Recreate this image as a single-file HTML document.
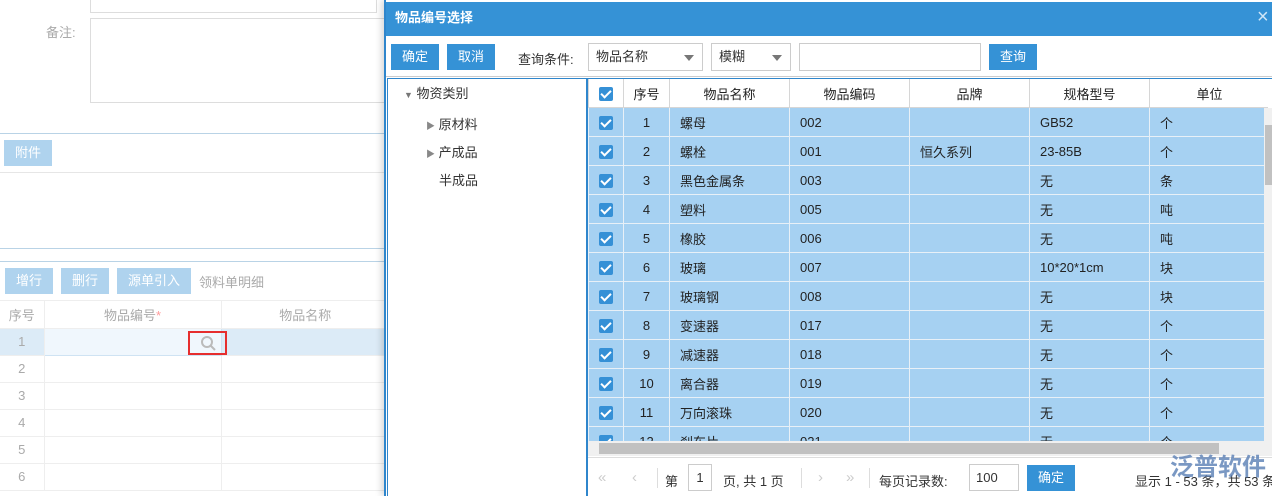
<!DOCTYPE html>
<html><head><meta charset="utf-8"><style>
*{box-sizing:border-box;margin:0;padding:0}
body{width:1272px;height:496px;overflow:hidden;background:#fff;font-family:"Liberation Sans","Noto Sans CJK SC",sans-serif;font-size:13px;position:relative;color:#333}
.a{position:absolute;white-space:nowrap}
.lb{color:#aaa}
.fb{background:#afd3ee;color:#fff;height:26px;line-height:26px;text-align:center}
.lt{border-collapse:collapse;table-layout:fixed}
.lt td{border-right:1px solid #eee;border-bottom:1px solid #eee;height:27px;color:#aaa;text-align:center}
.g{border-collapse:collapse;table-layout:fixed}
.g td{border:1px solid #d6d6d6;height:29px;padding:0 10px;white-space:nowrap;overflow:hidden;color:#222}
.g tr.r td{background:#a6d1f2;border-color:#e8f0f7}
.cb{display:inline-block;width:14px;height:14px;background:#3590d6;border-radius:2px;position:relative;vertical-align:middle}
.cb:after{content:"";position:absolute;left:4px;top:1px;width:4px;height:8px;border:solid #fff;border-width:0 2px 2px 0;transform:rotate(45deg)}
.btn{background:#3592d6;color:#fff;text-align:center;height:26px;line-height:26px}
.sel{border:1px solid #ccc;height:28px;line-height:26px;padding-left:7px;color:#333;background:#fff}
.sel:after{content:"";position:absolute;right:8px;top:11px;border:5px solid transparent;border-top:6px solid #777}
</style></head><body>
<div class="a" style="left:90px;top:0;width:287px;height:13px;border:1px solid #ddd;border-top:none"></div>
<div class="a lb" style="left:46px;top:22px">备注:</div>
<div class="a" style="left:90px;top:18px;width:300px;height:85px;border:1px solid #ddd"></div>
<div class="a" style="left:0;top:133px;width:384px;height:1px;background:#b9d3e6"></div>
<div class="a fb" style="left:4px;top:140px;width:48px">附件</div>
<div class="a" style="left:0;top:172px;width:384px;height:1px;background:#e6e6e6"></div>
<div class="a" style="left:0;top:248px;width:384px;height:1px;background:#b9d3e6"></div>
<div class="a" style="left:0;top:261px;width:384px;height:1px;background:#b9d3e6"></div>
<div class="a fb" style="left:5px;top:268px;width:48px">增行</div>
<div class="a fb" style="left:61px;top:268px;width:48px">删行</div>
<div class="a fb" style="left:117px;top:268px;width:74px">源单引入</div>
<div class="a lb" style="left:199px;top:272px">领料单明细</div>
<div class="a" style="left:0;top:300px;width:384px;height:1px;background:#eee"></div>
<table class="a lt" style="left:0;top:301px;width:390px">
<colgroup><col style="width:44px"><col style="width:177px"><col></colgroup>
<tr><td>序号</td><td>物品编号<span style="color:#f99">*</span></td><td>物品名称</td></tr>
<tr style="background:#dcebf7"><td>1</td><td style="background:#f0f7fd;border:1px solid #cfe3f3"></td><td></td></tr>
<tr><td>2</td><td></td><td></td></tr><tr><td>3</td><td></td><td></td></tr>
<tr><td>4</td><td></td><td></td></tr><tr><td>5</td><td></td><td></td></tr><tr><td>6</td><td></td><td></td></tr>
</table>
<div class="a" style="left:188px;top:331px;width:39px;height:24px;border:2px solid #e62e2e"></div>
<svg class="a" style="left:200px;top:335px" width="16" height="16"><circle cx="7" cy="7" r="5" fill="none" stroke="#bbb" stroke-width="2"/><line x1="11" y1="11" x2="15" y2="15" stroke="#bbb" stroke-width="2"/></svg>
<div class="a" style="left:384px;top:0;width:888px;height:496px;background:#fff;border-left:2px solid #2f86cc;box-shadow:-3px 0 6px rgba(0,0,0,.15)"></div>
<div class="a" style="left:386px;top:2px;width:886px;height:34px;background:#3592d6;color:#fff;font-weight:bold;font-size:13px;line-height:32px;padding-left:9px">物品编号选择</div>
<div class="a" style="left:1257px;top:6px;color:#d0e6f7;font-size:20px">×</div>
<div class="a btn" style="left:391px;top:44px;width:48px">确定</div>
<div class="a btn" style="left:447px;top:44px;width:48px">取消</div>
<div class="a" style="left:518px;top:49px;color:#333">查询条件:</div>
<div class="a sel" style="left:588px;top:43px;width:115px">物品名称</div>
<div class="a sel" style="left:711px;top:43px;width:80px">模糊</div>
<div class="a" style="left:799px;top:43px;width:182px;height:28px;border:1px solid #ccc"></div>
<div class="a btn" style="left:989px;top:44px;width:48px">查询</div>
<div class="a" style="left:386px;top:76px;width:886px;height:1px;background:#ccc"></div>
<div class="a" style="left:387px;top:78px;width:885px;height:418px;border:1px solid #2f86cc;border-right:none;border-bottom:none"></div>
<div class="a" style="left:586px;top:78px;width:2px;height:418px;background:#2f86cc"></div>
<div class="a" style="left:404px;top:86px;color:#333;line-height:16px"><span style="color:#777;font-size:9px">▼</span> 物资类别</div>
<div class="a" style="left:426px;top:114px;color:#333"><span style="color:#888;font-size:9px">▶</span> 原材料</div>
<div class="a" style="left:426px;top:142px;color:#333"><span style="color:#888;font-size:9px">▶</span> 产成品</div>
<div class="a" style="left:439px;top:170px;color:#333">半成品</div>
<div class="a" style="left:588px;top:79px;width:680px;height:362px;overflow:hidden">
<table class="g" style="width:681px;margin-top:-1px">
<colgroup><col style="width:35px"><col style="width:46px"><col style="width:120px"><col style="width:120px"><col style="width:120px"><col style="width:120px"><col style="width:120px"></colgroup>
<tr style="background:#fff"><td style="text-align:center;padding:0;height:29px"><span class="cb"></span></td><td style="text-align:center;padding:0">序号</td><td style="text-align:center">物品名称</td><td style="text-align:center">物品编码</td><td style="text-align:center">品牌</td><td style="text-align:center">规格型号</td><td style="text-align:center">单位</td></tr>
<tr class="r"><td style="text-align:center;padding:0"><span class="cb"></span></td><td style="text-align:center;padding:0">1</td><td>螺母</td><td>002</td><td></td><td>GB52</td><td>个</td></tr>
<tr class="r"><td style="text-align:center;padding:0"><span class="cb"></span></td><td style="text-align:center;padding:0">2</td><td>螺栓</td><td>001</td><td>恒久系列</td><td>23-85B</td><td>个</td></tr>
<tr class="r"><td style="text-align:center;padding:0"><span class="cb"></span></td><td style="text-align:center;padding:0">3</td><td>黑色金属条</td><td>003</td><td></td><td>无</td><td>条</td></tr>
<tr class="r"><td style="text-align:center;padding:0"><span class="cb"></span></td><td style="text-align:center;padding:0">4</td><td>塑料</td><td>005</td><td></td><td>无</td><td>吨</td></tr>
<tr class="r"><td style="text-align:center;padding:0"><span class="cb"></span></td><td style="text-align:center;padding:0">5</td><td>橡胶</td><td>006</td><td></td><td>无</td><td>吨</td></tr>
<tr class="r"><td style="text-align:center;padding:0"><span class="cb"></span></td><td style="text-align:center;padding:0">6</td><td>玻璃</td><td>007</td><td></td><td>10*20*1cm</td><td>块</td></tr>
<tr class="r"><td style="text-align:center;padding:0"><span class="cb"></span></td><td style="text-align:center;padding:0">7</td><td>玻璃钢</td><td>008</td><td></td><td>无</td><td>块</td></tr>
<tr class="r"><td style="text-align:center;padding:0"><span class="cb"></span></td><td style="text-align:center;padding:0">8</td><td>变速器</td><td>017</td><td></td><td>无</td><td>个</td></tr>
<tr class="r"><td style="text-align:center;padding:0"><span class="cb"></span></td><td style="text-align:center;padding:0">9</td><td>减速器</td><td>018</td><td></td><td>无</td><td>个</td></tr>
<tr class="r"><td style="text-align:center;padding:0"><span class="cb"></span></td><td style="text-align:center;padding:0">10</td><td>离合器</td><td>019</td><td></td><td>无</td><td>个</td></tr>
<tr class="r"><td style="text-align:center;padding:0"><span class="cb"></span></td><td style="text-align:center;padding:0">11</td><td>万向滚珠</td><td>020</td><td></td><td>无</td><td>个</td></tr>
<tr class="r"><td style="text-align:center;padding:0"><span class="cb"></span></td><td style="text-align:center;padding:0">12</td><td>刹车片</td><td>021</td><td></td><td>无</td><td>个</td></tr>
</table></div>
<div class="a" style="left:1264px;top:108px;width:8px;height:333px;background:#f0f0f0"></div>
<div class="a" style="left:1265px;top:125px;width:7px;height:60px;background:#c1c1c1"></div>
<div class="a" style="left:588px;top:441px;width:684px;height:15px;background:#f0f0f0"></div>
<div class="a" style="left:599px;top:443px;width:620px;height:11px;background:#c1c1c1"></div>
<div class="a" style="left:588px;top:457px;width:684px;height:1px;background:#ddd"></div>
<div class="a" style="left:598px;top:469px;color:#ccc;font-size:15px">«</div>
<div class="a" style="left:632px;top:469px;color:#ccc;font-size:15px">‹</div>
<div class="a" style="left:657px;top:468px;width:1px;height:20px;background:#ddd"></div>
<div class="a" style="left:665px;top:471px">第</div>
<div class="a" style="left:688px;top:464px;width:24px;height:27px;border:1px solid #ccc;text-align:center;line-height:25px">1</div>
<div class="a" style="left:723px;top:471px">页, 共 1 页</div>
<div class="a" style="left:801px;top:468px;width:1px;height:20px;background:#ddd"></div>
<div class="a" style="left:818px;top:469px;color:#ccc;font-size:15px">›</div>
<div class="a" style="left:846px;top:469px;color:#ccc;font-size:15px">»</div>
<div class="a" style="left:869px;top:468px;width:1px;height:20px;background:#ddd"></div>
<div class="a" style="left:879px;top:471px">每页记录数:</div>
<div class="a" style="left:969px;top:464px;width:50px;height:27px;border:1px solid #ccc;line-height:25px;padding-left:6px">100</div>
<div class="a btn" style="left:1027px;top:465px;width:48px">确定</div>
<div class="a" style="left:1135px;top:471px">显示 1 - 53 条，共 53 条</div>
<div class="a" style="left:1170px;top:447px;color:#5a7fb5;font-size:24px;font-weight:bold;opacity:.8">泛普软件</div>
</body></html>
